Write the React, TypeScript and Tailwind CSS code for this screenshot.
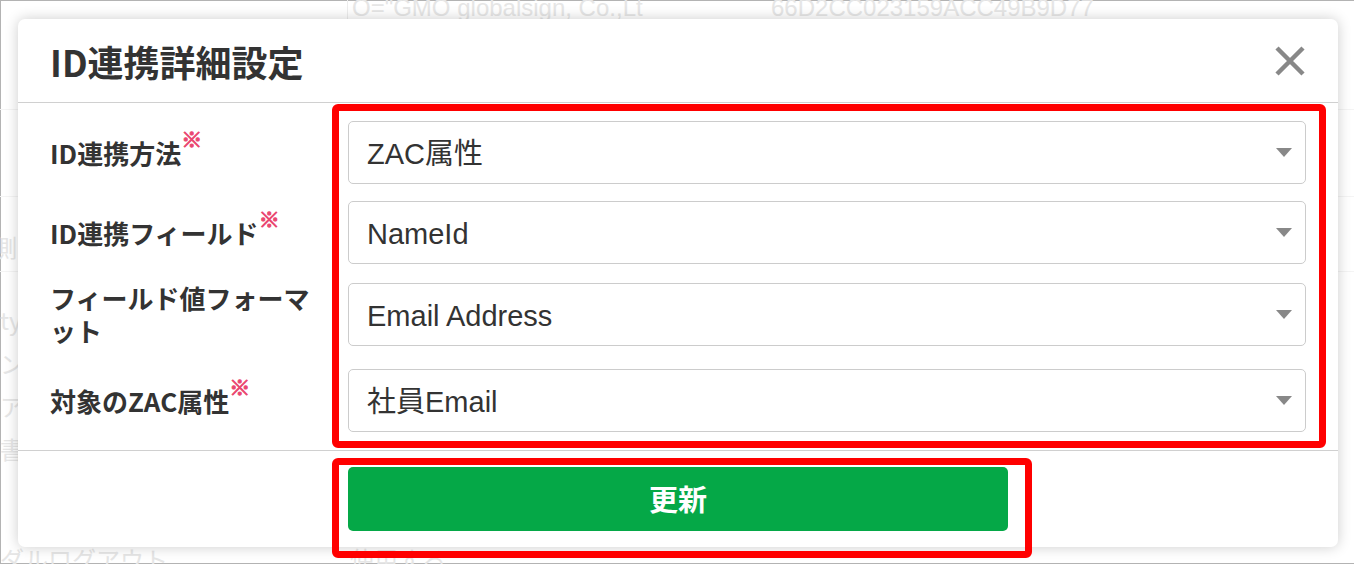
import React from 'react';

const jp = { fontFamily: '"Noto Sans CJK JP", "Liberation Sans", sans-serif' };
const val = { fontFamily: '"Liberation Sans", "Noto Sans CJK JP", sans-serif' };

const Caret = () => (
  <svg width="16" height="9" viewBox="0 0 16 9" className="shrink-0">
    <path d="M0 0 H16 L8 9 Z" fill="#888888" />
  </svg>
);

const CloseIcon = () => (
  <svg width="32" height="32" viewBox="0 0 32 32">
    <path d="M3 3 L29 29 M29 3 L3 29" stroke="#888888" strokeWidth="4.5" />
  </svg>
);

const Select = ({ value }: { value: string }) => (
  <div
    className="flex h-[63px] flex-1 items-center justify-between rounded-[5px] border border-[#cccccc] bg-white pl-[18px] pr-[13px] text-[29px] text-[#333333]"
    style={val}
  >
    <span className="pt-[5px]">{value}</span>
    <Caret />
  </div>
);

const Label = ({ children, required }: { children: React.ReactNode; required?: boolean }) => (
  <div className="w-[280px] shrink-0 text-[26px] font-bold leading-[33px] text-[#333333]" style={jp}>
    {children}
    {required && (
      <span className="relative -top-[8px] align-top text-[21px] font-bold leading-none text-[#ea4770] [-webkit-text-stroke:1px_#ea4770]">
        ※
      </span>
    )}
  </div>
);

export default function App() {
  return (
    <div className="relative h-[564px] w-[1354px] overflow-hidden bg-white shadow-[inset_1px_1px_0_#b3b3b3,inset_0_-1px_0_#b3b3b3]">
      {/* faded page behind the dialog */}
      <div className="flex h-full flex-col text-[24px] text-[#e6e6e6]" style={val}>
        <div className="flex h-[19px] items-end overflow-hidden leading-[22px]">
          <div className="h-full w-[348px] border-r border-[#ededed]" />
          <div className="w-[423px] pl-[4px]">O="GMO globalsign, Co.,Lt</div>
          <div>66D2CC023159ACC49B9D77</div>
        </div>
        <div className="h-[91px] border-b border-[#f4f4f4]" />
        <div className="h-[87px] border-b border-[#f4f4f4]" />
        <div className="flex h-[75px] items-end border-b border-[#f4f4f4] pb-[6px]">
          <span className="-ml-[7px]" style={jp}>側</span>
        </div>
        <div className="flex flex-col pt-[26px] leading-[43px]" style={jp}>
          <span>ty</span>
          <span>ン</span>
          <span>ア</span>
          <span>書</span>
        </div>
        <div className="mt-auto flex h-[20px] items-start overflow-hidden leading-[30px]" style={jp}>
          <span className="w-[350px]">ダルログアウト</span>
          <span>使用する</span>
        </div>
      </div>

      {/* dialog */}
      <div className="absolute left-[18px] top-[19px] w-[1320px] rounded-[7px] bg-white shadow-[0_0_14px_rgba(0,0,0,0.2)]">
        <div className="flex h-[84px] items-center justify-between border-b border-[#d0d0d0] px-[32px]">
          <h2 className="text-[36px] font-bold text-[#333333]" style={jp}>ID連携詳細設定</h2>
          <CloseIcon />
        </div>

        <div className="flex flex-col gap-[17px] px-[32px] pb-[18px] pt-[18px]">
          <div className="flex items-center gap-[18px]">
            <Label required>ID連携方法</Label>
            <Select value="ZAC属性" />
          </div>
          <div className="flex items-center gap-[18px]">
            <Label required>ID連携フィールド</Label>
            <Select value="NameId" />
          </div>
          <div className="flex items-center gap-[18px]">
            <Label>フィールド値フォーマット</Label>
            <Select value="Email Address" />
          </div>
          <div className="mt-[5px] flex items-center gap-[18px]">
            <Label required>対象のZAC属性</Label>
            <Select value="社員Email" />
          </div>
        </div>

        <div className="border-t border-[#d0d0d0] px-[32px] py-[16px]">
          <button
            className="ml-[298px] flex h-[64px] w-[660px] items-center justify-center rounded-[5px] bg-[#05a847] text-[29px] font-bold text-white"
            style={jp}
          >
            更新
          </button>
        </div>
      </div>

      {/* red annotation frames */}
      <div className="absolute left-[332px] top-[104px] h-[344px] w-[994px] rounded-[6px] border-[7px] border-[#ff0000]" />
      <div className="absolute left-[332px] top-[458px] h-[100px] w-[700px] rounded-[6px] border-[7px] border-[#ff0000]" />
    </div>
  );
}
